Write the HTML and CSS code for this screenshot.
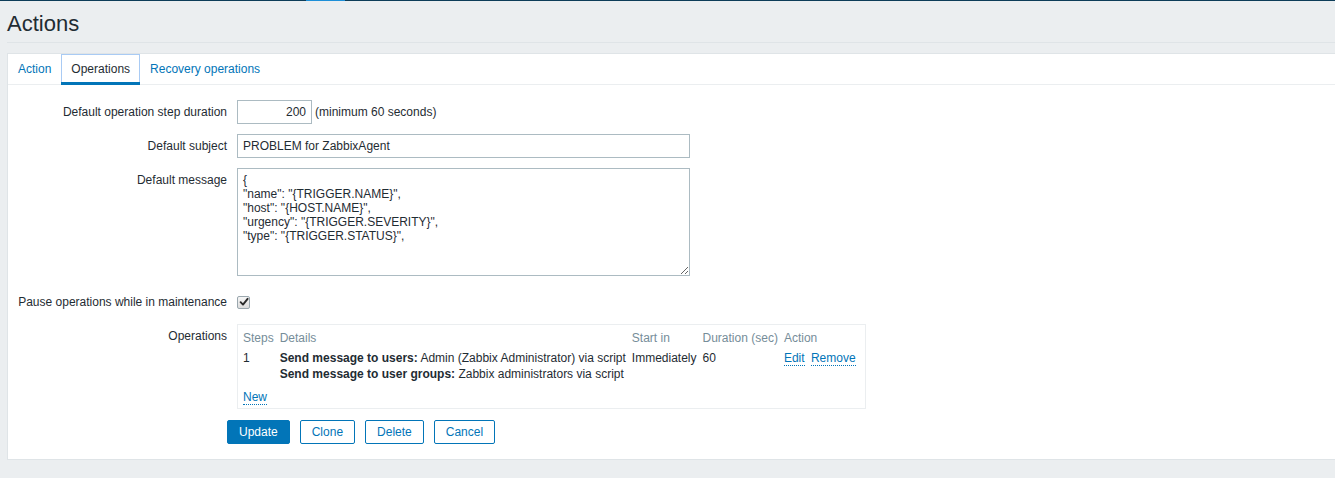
FILE: index.html
```html
<!DOCTYPE html>
<html lang="en">
<head>
<meta charset="utf-8">
<title>Actions</title>
<link rel="stylesheet" href="styles.css">
</head>
<body>
<div class="topline"><span class="seg seg-dark-a"></span><span class="seg seg-blue"></span><span class="seg seg-dark-b"></span></div>
<header class="page-header"><h1 class="title">Actions</h1></header>
<main class="panel">
  <ul class="tabs">
    <li class="tab"><span class="link">Action</span></li>
    <li class="tab tab-active">Operations</li>
    <li class="tab"><span class="link">Recovery operations</span></li>
  </ul>
  <form class="form">
    <div class="row">
      <label class="lbl">Default operation step duration</label>
      <div class="ctrl ctrl-inline"><input class="input input-num" type="text" value="200"><span>(minimum 60 seconds)</span></div>
    </div>
    <div class="row">
      <label class="lbl">Default subject</label>
      <div class="ctrl"><input class="input input-wide" type="text" value="PROBLEM for ZabbixAgent"></div>
    </div>
    <div class="row row-textarea">
      <label class="lbl">Default message</label>
      <div class="ctrl"><textarea class="textarea">{
"name": "{TRIGGER.NAME}",
"host": "{HOST.NAME}",
"urgency": "{TRIGGER.SEVERITY}",
"type": "{TRIGGER.STATUS}",</textarea></div>
    </div>
    <div class="row">
      <label class="lbl">Pause operations while in maintenance</label>
      <div class="ctrl ctrl-inline"><span class="checkbox"><svg width="10" height="10" viewBox="0 0 10 10"><path d="M1.6 5.2 L4 7.6 L8.6 1.8" fill="none" stroke="#2b2b2b" stroke-width="1.9" stroke-linecap="round" stroke-linejoin="round"/></svg></span></div>
    </div>
    <div class="row">
      <label class="lbl">Operations</label>
      <div class="ctrl">
        <div class="ops-box">
          <table class="ops">
            <thead>
              <tr><th>Steps</th><th>Details</th><th>Start in</th><th>Duration (sec)</th><th>Action</th></tr>
            </thead>
            <tbody>
              <tr>
                <td>1</td>
                <td><b>Send message to users:</b> Admin (Zabbix Administrator) via script<br><b>Send message to user groups:</b> Zabbix administrators via script</td>
                <td>Immediately</td>
                <td>60</td>
                <td><span class="dlink">Edit</span> <span class="dlink dlink-gap">Remove</span></td>
              </tr>
              <tr class="new-row"><td colspan="5"><span class="dlink">New</span></td></tr>
            </tbody>
          </table>
        </div>
      </div>
    </div>
    <div class="buttons">
      <button type="button" class="btn btn-primary">Update</button>
      <button type="button" class="btn">Clone</button>
      <button type="button" class="btn">Delete</button>
      <button type="button" class="btn">Cancel</button>
    </div>
  </form>
</main>
</body>
</html>
```
FILE: styles.css
```css
html, body {
  margin: 0;
  padding: 0;
}
body {
  background: #ebeef0;
  font-family: "Liberation Sans", Arial, sans-serif;
  font-size: 12px;
  color: #1f2c33;
  overflow: hidden;
}
.topline {
  display: flex;
  height: 1px;
}
.seg { display: block; height: 1px; }
.seg-dark-a { width: 306px; background: #0c3c58; }
.seg-blue { width: 39px; background: #1d8fd8; }
.seg-dark-b { flex: 1; background: #0c3c58; }

.page-header {
  margin-left: 7px;
  padding: 12px 0 7px;
  border-bottom: 1px solid #dfe4e7;
}
.title {
  margin: 0;
  font-size: 22px;
  line-height: 22px;
  font-weight: normal;
  color: #1f2c33;
}

.panel {
  display: block;
  margin: 10px 0 0 7px;
  background: #fff;
  border: 1px solid #dfe4e7;
  border-right: 0;
  padding-bottom: 15px;
}

.tabs {
  list-style: none;
  margin: 0;
  padding: 0;
  display: flex;
  align-items: flex-start;
  height: 30px;
  border-bottom: 1px solid #ebeef0;
}
.tab {
  padding: 0 10px;
  line-height: 30px;
  height: 31px;
  box-sizing: border-box;
}
.tab .link { color: #0275b8; }
.tab-active {
  color: #1f2c33;
  box-shadow: inset 0 -3px 0 #0275b8, inset 0 0 0 1px #a9cbf4;
}

.form {
  display: flex;
  flex-direction: column;
  gap: 10px;
  padding-top: 15px;
}
.row {
  display: flex;
  gap: 10px;
  align-items: flex-start;
}
.lbl {
  flex: none;
  width: 219px;
  text-align: right;
  line-height: 24px;
  white-space: nowrap;
}
.ctrl { min-height: 24px; }
.ctrl-inline {
  display: flex;
  align-items: center;
  gap: 3px;
  height: 24px;
}
.input {
  box-sizing: border-box;
  height: 24px;
  border: 1px solid #acbbc2;
  padding: 0 5px;
  margin: 0;
  font: inherit;
  color: #1f2c33;
  background: #fff;
  outline: none;
}
.input-num {
  width: 75px;
  text-align: right;
}
.input-wide { width: 453px; display: block; }

.row-textarea { padding-bottom: 4px; }
.textarea {
  display: block;
  box-sizing: border-box;
  width: 453px;
  height: 108px;
  margin: 0;
  border: 1px solid #acbbc2;
  padding: 4px 5px;
  font: inherit;
  line-height: 14px;
  color: #1f2c33;
  background: #fff;
  outline: none;
  overflow: hidden;
}

.checkbox {
  box-sizing: border-box;
  width: 13px;
  height: 13px;
  border: 1px solid #9aa7ae;
  border-radius: 2px;
  background: linear-gradient(#f6f6f6, #dcdcdc);
  display: flex;
  align-items: center;
  justify-content: center;
}
.checkbox svg { display: block; }

.ops-box {
  box-sizing: border-box;
  width: 629px;
  border: 1px solid #ebeef0;
  padding: 3px 2px 1px;
}
.ops {
  border-collapse: collapse;
  border-spacing: 0;
}
.ops th, .ops td {
  padding: 2px 3px;
  line-height: 16px;
  text-align: left;
  vertical-align: top;
  white-space: nowrap;
}
.ops th {
  font-weight: normal;
  color: #768d99;
}
.ops b { font-weight: bold; }
.ops .new-row td { padding-top: 5px; }
.dlink {
  color: #0275b8;
  border-bottom: 1px dotted #0275b8;
}
.dlink-gap { margin-left: 3px; }

.buttons {
  display: flex;
  gap: 10px;
  padding-left: 219px;
  margin-top: 1px;
}
.btn {
  box-sizing: border-box;
  height: 24px;
  padding: 0 11px;
  border: 1px solid #0275b8;
  border-radius: 2px;
  background: #fff;
  color: #0275b8;
  font: inherit;
  margin: 0;
  cursor: pointer;
}
.btn-primary {
  background: #0275b8;
  color: #fff;
}
```
